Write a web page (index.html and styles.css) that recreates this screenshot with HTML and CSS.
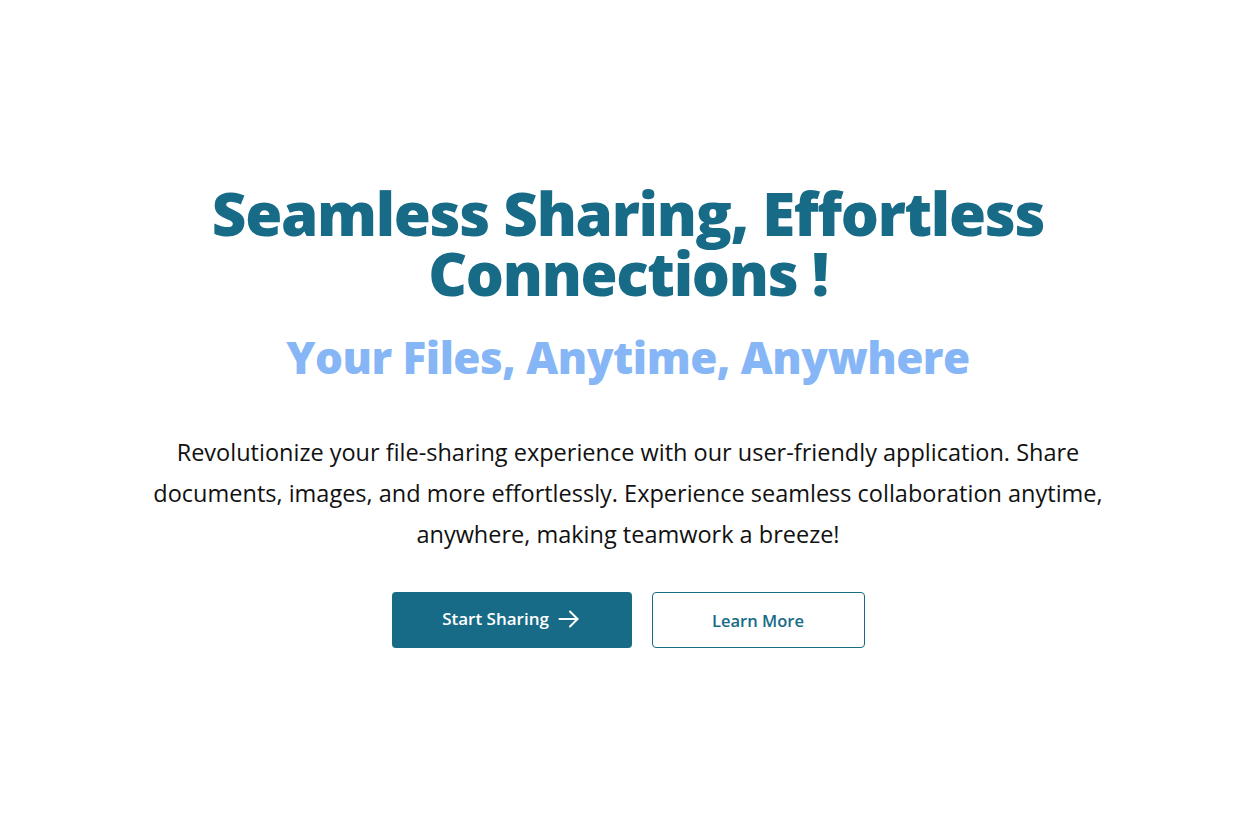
FILE: index.html
```html
<!DOCTYPE html>
<html lang="en">
<head>
<meta charset="utf-8">
<title>Seamless Sharing</title>
<link rel="stylesheet" href="styles.css">
</head>
<body>
<main class="hero">
  <div class="hero-inner">
    <h1 class="title">Seamless Sharing, Effortless Connections !</h1>
    <h2 class="subtitle">Your Files, Anytime, Anywhere</h2>
    <p class="lead">Revolutionize your file-sharing experience with our user-friendly application. Share documents, images, and more effortlessly. Experience seamless collaboration anytime, anywhere, making teamwork a breeze!</p>
    <div class="actions">
      <a class="btn btn-primary" href="#">Start Sharing
        <svg class="arrow" width="24" height="24" viewBox="0 0 24 24" fill="none" stroke="currentColor" stroke-width="2" stroke-linecap="round" stroke-linejoin="round"><path d="M2.5 12h18"/><path d="M13 4.5l7.5 7.5-7.5 7.5"/></svg>
      </a>
      <a class="btn btn-outline" href="#">Learn More</a>
    </div>
  </div>
</main>
</body>
</html>
```
FILE: styles.css
```css
* { box-sizing: border-box; }
html, body { margin: 0; padding: 0; background: #fff; }
body { font-family: "Open Sans", "Noto Sans", sans-serif; color: #111; }
.hero {
  min-height: 100vh;
  display: flex;
  align-items: center;
  justify-content: center;
  text-align: center;
}
.hero-inner {
  display: flex;
  flex-direction: column;
  align-items: center;
  padding: 0 16px 0 24px;
  margin-top: 4px;
}
.title {
  margin: 0;
  max-width: 860px;
  font-size: 60px;
  line-height: 60px;
  font-weight: 800;
  letter-spacing: -1.3px;
  color: #176b87;
}
.subtitle {
  margin: 26px 0 0;
  font-size: 44px;
  line-height: 56px;
  font-weight: 800;
  letter-spacing: -0.5px;
  color: #86b6f6;
}
.lead {
  margin: 47px 0 0;
  max-width: 960px;
  font-size: 23.5px;
  line-height: 41px;
  color: #111;
}
.actions {
  margin-top: 37px;
  display: flex;
  gap: 20px;
}
.btn {
  display: inline-flex;
  align-items: center;
  justify-content: center;
  height: 56px;
  border-radius: 4px;
  font-size: 17px;
  font-weight: 600;
  text-decoration: none;
}
.btn-primary {
  width: 240px;
  background: #176b87;
  color: #fff;
  gap: 8px;
  padding-bottom: 3px;
}
.btn-outline {
  width: 213px;
  border: 1px solid #176b87;
  color: #176b87;
  font-size: 16.5px;
}
.arrow { display: block; }
```
